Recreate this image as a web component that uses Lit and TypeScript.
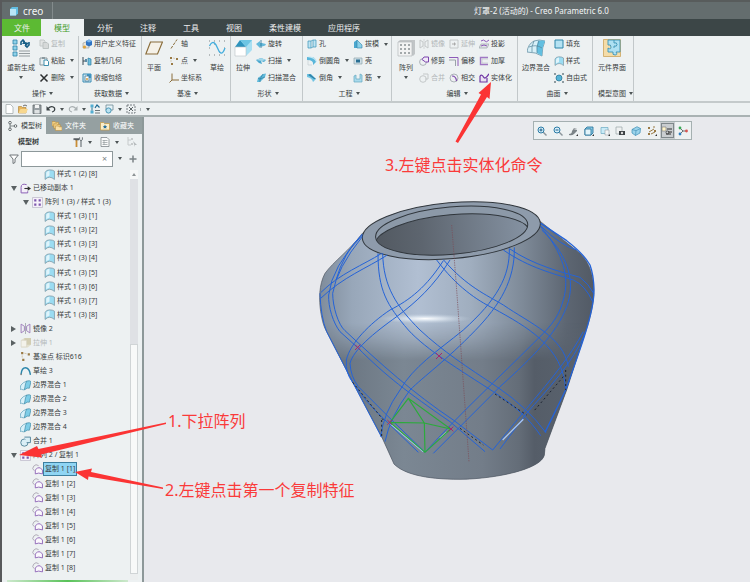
import { LitElement, html, svg, css, nothing, TemplateResult } from "lit";
import { customElement, state } from "lit/decorators.js";
import { classMap } from "lit/directives/class-map.js";

type Shape = ReturnType<typeof svg>;

/* Small glyphs are drawn on a 10 x 10 grid, large ones on 18 x 18. */
const small: Record<string, Shape> = {
  copy: svg`<path d="M1 1h4l1 1v5H1z" fill="#e3e5e5" stroke="#c3c8c8"/><path d="M4 3.5h4l1.500 1.500v4.500H4z" fill="#d6d9d9" stroke="#bcc2c2"/>`,
  paste: svg`<path d="M1 2h7v7H1z" fill="#e9eef0" stroke="#8b999f"/><path d="M3 1h3v2H3z" fill="#8b999f"/><path d="M5 4h3l1.500 1.500v4H5z" fill="#fff" stroke="#3f8fae"/>`,
  del: svg`<path d="M1.500 1.500L8.500 8.500M8.500 1.500L1.500 8.500" stroke="#2c2f30" stroke-width="1.500"/>`,
  udf: svg`<path d="M1 4l3-1 3 1v5H1z" fill="#e6e4dc" stroke="#9c9c95" stroke-width=".6"/><path d="M4 2l3-1.500 3 1.500v4l-3 1.500L4 6z" fill="#2f74c4"/><path d="M4 2l3-1.500 3 1.500-3 1.500z" fill="#79b4e8"/><circle cx="2.500" cy="8" r="1.600" fill="#e0a33c"/>`,
  copygeom: svg`<path d="M1 1v8M1 5h4" stroke="#3b4b55" fill="none"/><path d="M3 3h2v3H3z" fill="#5d8ba6"/><path d="M6 2l3 1v6H6z" fill="#6fc0df" stroke="#2b7ba0" stroke-width=".7"/>`,
  shrink: svg`<path d="M1 1h8v8H1z" fill="#cfe9f4" stroke="#3b8cb4"/><path d="M5 1h4v4H5z" fill="#3f95c4"/><path d="M3 3h4v5H3z" fill="#fff" stroke="#487a94" stroke-width=".8"/><circle cx="5" cy="6" r="1" fill="#d79a3a"/>`,
  axis: svg`<path d="M2 9.500L8 .5" stroke="#8a6d3b" stroke-dasharray="3 1.200"/>`,
  point: svg`<path d="M1 1h2v2H1zM7 2h2v2H7zM2 7h2v2H2z" fill="#9a7a44"/><path d="M4 2l2 .5M2 4v2" stroke="#c8b48e" stroke-width=".6"/>`,
  csys: svg`<path d="M3 .5V7H10M3 7L.5 9.500" fill="none" stroke="#8a6d3b"/>`,
  revolve: svg`<path d="M0 5l4-3v2c3 0 5 .5 6 1.500-1 1.500-3 2-6 2V9z" fill="#64b9da"/><path d="M5 1v8" stroke="#2a7598" stroke-width=".8"/>`,
  sweep: svg`<path d="M0 4l5-2 5 2-2 2-3-1 1 3-3-1z" fill="#4aa7ce"/><path d="M0 4l5-2 5 2-4 1z" fill="#a4d8ea"/>`,
  blend: svg`<path d="M1 9L2 5l5-4 3-.5L9 4 4 9z" fill="#5fb9da"/><path d="M2 5l2 1v3M7 1l-3 5 5-2" stroke="#2a7598" stroke-width=".6" fill="none"/>`,
  hole: svg`<path d="M1 2h3v7H1zM6 1h3v7H6z" fill="#bfe4f2" stroke="#3793b8" stroke-width=".7"/><path d="M4 2l2-1M4 9l2-1" stroke="#3793b8" stroke-width=".7"/>`,
  round: svg`<path d="M0 1h4q5 0 5 5l-3 3q1-5-6-5z" fill="#59b6da"/><path d="M0 1l3-.5Q9 1 10 6L9 6Q8 2 0 1z" fill="#c3e7f3"/><path d="M1 4v5h4" stroke="#c1c9cc" stroke-width=".6" fill="none"/>`,
  chamfer: svg`<path d="M0 1h4l5 5-3 3q-1-4-6-5z" fill="#6fc3e2"/><path d="M3 1l6 5H7L1 2z" fill="#2f83a9"/>`,
  draft: svg`<path d="M1 9V3l3-2v8z" fill="#4ba7ce"/><path d="M4 1l5 5v3H4z" fill="#8ad0e8" stroke="#2e82a7" stroke-width=".6"/>`,
  shell: svg`<path d="M1 2h8v6H1z" fill="#cfe0e7" stroke="#8fa4ad" stroke-width=".7"/><path d="M3 3.500h4v3H3z" fill="#2a6f93"/>`,
  rib: svg`<path d="M1 3v6h8V2L7 1v5H3V2z" fill="#a9daec" stroke="#63a7c0" stroke-width=".7"/>`,
  mirror: svg`<path d="M1 1l3 2v4L1 9zM9 1L6 3v4l3 2z" fill="none" stroke="#c4c8c9"/><path d="M5 0v10" stroke="#d3d6d7"/>`,
  mirrorP: svg`<path d="M1 1l3 2v4L1 9zM9 1L6 3v4l3 2z" fill="none" stroke="#9a78b8" stroke-width=".8"/><path d="M5 0v10" stroke="#8a8f94" stroke-width=".6"/>`,
  extend: svg`<path d="M1 1h8v8H1z" fill="none" stroke="#c4c8c9"/><path d="M3 5h3" stroke="#aaa"/><path d="M5 3l2 2-2 2z" fill="#aaa"/>`,
  trim: svg`<circle cx="4" cy="6" r="3.400" fill="none" stroke="#9aa3a8" stroke-width=".8"/><path d="M5 1h4.500v5H6.500L3 3.500z" fill="#f1e9f8" stroke="#7b45ad"/>`,
  offset: svg`<path d="M0 1.500h9V10" fill="none" stroke="#8d5ab8"/><path d="M0 4h6.500V10" fill="none" stroke="#9aa3a8"/>`,
  merge: svg`<circle cx="4" cy="6" r="3.300" fill="none" stroke="#c4c8c9"/><path d="M4 1h5v5H6" fill="none" stroke="#c4c8c9"/>`,
  mergeT: svg`<circle cx="4" cy="6" r="3.300" fill="#d9eef6" stroke="#5c8ba0" stroke-width=".9"/><path d="M4 1h5.500v5H6" fill="#d9eef6" stroke="#5c8ba0" stroke-width=".9"/>`,
  intersect: svg`<circle cx="5" cy="5" r="4" fill="#eef0f2" stroke="#9aa3a8" stroke-width=".8"/><path d="M3 3q4 0 4.500 5" fill="none" stroke="#7b45ad" stroke-width="1.200"/>`,
  project: svg`<path d="M0 9l2-4h8L8 9z" fill="#e1e4e7" stroke="#9aa3a8" stroke-width=".7"/><path d="M2 2q3-2 4 0t4-1M2 7q3-2 6 0" fill="none" stroke="#8d5ab8"/>`,
  thicken: svg`<path d="M9 1.500H1.500v7H9" fill="none" stroke="#a078c4" stroke-width="1.400"/><path d="M9 3H3v4h6" fill="none" stroke="#b9bfc4" stroke-width=".6"/>`,
  solidify: svg`<path d="M1 3v6h7V5" fill="#e9e2f1" stroke="#6f35a5" stroke-width="1.200"/><path d="M1 3q2-2 3.500 1T10 .8" fill="none" stroke="#6f35a5" stroke-width="1.300"/>`,
  fill: svg`<path d="M1 1h8v8H1z" fill="#b5e2f2" stroke="#2d84a8"/>`,
  style: svg`<path d="M1 9.500V3Q2 .8 5 .8T9.500 2v7.500Q5 5.500 1 9.500z" fill="#9bdcf2" stroke="#7c98a5" stroke-width=".7"/><path d="M2 3.500Q3 1.500 5 1.500V6L2 7.500z" fill="#dff4fb"/>`,
  freestyle: svg`<circle cx="5" cy="5" r="3" fill="#56b3d6" stroke="#23708f" stroke-width=".7"/><path d="M0 0h2v2H0zM8 0h2v2H8zM0 8h2v2H0zM8 8h2v2H8z" fill="#8e9ba0"/>`,
  new: svg`<path d="M2 .5h4.500L9 3v6.500H2z" fill="#fff" stroke="#9ba3a5" stroke-width=".7"/>`,
  open: svg`<path d="M.5 9V2.500h3l1 1H8V9z" fill="#e7b55c" stroke="#ab7d2b" stroke-width=".6"/><path d="M2.500 5H10L8 9H.5z" fill="#f7d78e"/><path d="M5 2q2-2 4 0" stroke="#333" fill="none" stroke-width=".7"/>`,
  save: svg`<path d="M1 1h8v8.500H1z" fill="#98a0a4" stroke="#62696d" stroke-width=".8"/><path d="M3 1h4v3H3z" fill="#f3f4f4"/><path d="M2.500 6h5v3.500h-5z" fill="#dfe2e3"/>`,
  undo: svg`<path d="M2 4.500Q6 1 8.500 4 9.500 7 6 8" fill="none" stroke="#3a4144" stroke-width="1.300"/><path d="M.5 2v4.500h4z" fill="#3a4144"/>`,
  redo: svg`<path d="M8 4.500Q4 1 1.500 4 .5 7 4 8" fill="none" stroke="#a9b0b2" stroke-width="1.100"/><path d="M9.500 2v4.500h-4z" fill="#a9b0b2"/>`,
  regen: svg`<path d="M.5.500h3v3h-3zM.5 6.500h3v3h-3z" fill="#53aed2"/><path d="M5 6.500h5M5 9h5" stroke="#6d777b"/><path d="M5 4l2-3 2.500 2.500" stroke="#1c6a92" fill="none" stroke-width="1.200"/><path d="M2 3.500v3" stroke="#2c6f8f"/>`,
  windows: svg`<path d="M2 1h7v5H2z" fill="#e5f2f7" stroke="#6f8a96" stroke-width=".8"/><circle cx="4.500" cy="6.500" r="2.600" fill="#b9e2f1" stroke="#2d84a8" stroke-width=".8"/>`,
  close: svg`<path d="M1 1h8v8H1z" fill="none" stroke="#5e6669" stroke-width=".8" stroke-dasharray="2 1"/><path d="M3 3l4 4M7 3L3 7" stroke="#5e6669"/>`,
  treeTab: svg`<path d="M2 2v6M2 5h5" stroke="#596164" stroke-width=".7" fill="none"/><circle cx="2" cy="1.700" r="1.300" fill="#fff" stroke="#444c4f" stroke-width=".8"/><circle cx="7.500" cy="5" r="1.300" fill="#fff" stroke="#444c4f" stroke-width=".8"/><circle cx="2" cy="8.300" r="1.300" fill="#fff" stroke="#444c4f" stroke-width=".8"/>`,
  folders: svg`<path d="M0 .5h3l.6.800h3V5H0z" fill="#f2cf85" stroke="#ae8234" stroke-width=".5"/><path d="M1.700 2.800h3l.6.800h3V7.300H1.700z" fill="#f2cf85" stroke="#ae8234" stroke-width=".5"/><path d="M3.400 5h3l.6.800h3v3.700H3.400z" fill="#f9e0a9" stroke="#ae8234" stroke-width=".5"/>`,
  fav: svg`<path d="M.5 1.500h3l1 1h5v6.500h-9z" fill="#fbeec8" stroke="#c49a42" stroke-width=".7"/><path d="M5 3.500l.7 1.400 1.500.2-1.100 1 .3 1.500L5 6.900l-1.400.7.3-1.500-1.100-1 1.500-.2z" fill="#26709b"/>`,
  tools: svg`<path d="M3.500 3v7" stroke="#c98d35" stroke-width="1.800"/><path d="M.5 1.200h5.500v2H2q-.5-1-1.500 0z" fill="#555c60"/><path d="M8 3v7" stroke="#6f777b" stroke-width="1.200"/><path d="M6.600.3v2.400L8 3.700l1.400-1V.3" fill="none" stroke="#6f777b"/>`,
  sheet: svg`<path d="M1 .5h6L9 2.500v7H1z" fill="#fafbfb" stroke="#70797c" stroke-width=".7"/><path d="M2.500 3.500h5M2.500 5.500h5M2.500 7.500h5M4 3v5" stroke="#90999c" stroke-width=".7"/>`,
  treeGray: svg`<path d="M1 0v8h3M1 3h3" fill="none" stroke="#c6cacb"/><path d="M4 1h2v2H4zM4 6h2v2H4z" fill="#c6cacb"/><path d="M6 4l4 4H8v2z" fill="#b4b9bb"/>`,
  funnel: svg`<path d="M.7 1h8.600L6 5v3.500L4 9.500V5z" fill="#fff" stroke="#60686b" stroke-width=".9"/>`,
  plus: svg`<path d="M5 1.500v7M1.500 5h7" stroke="#7b8386" stroke-width="1.500"/>`,
  moved: svg`<path d="M6 1.500Q1 0 1 4v5h6V7.500" fill="#f4eff9" stroke="#8a5fb4" stroke-width=".9"/><path d="M4 5h4" stroke="#333"/><path d="M7 3l3 2-3 2z" fill="#333"/>`,
  pattern: svg`<path d="M.5.500h9v9h-9z" fill="#f7f3fb" stroke="#a7a2b5" stroke-width=".5"/><path d="M2 2h2v2H2zM6 2h2v2H6zM2 6h2v2H2zM6 6h2v2H6z" fill="#7d57ad"/>`,
  extrudeGray: svg`<path d="M1 3l3-2h6v6l-3 2.500H1z" fill="#e2dfcd"/><path d="M4 1h6v6H4z" fill="#d2cdb2"/><path d="M1 3h5v6H1z" fill="#f3f2ea" stroke="#d3d0bf" stroke-width=".5"/>`,
  sketch: svg`<path d="M1 8.500Q1.500 2.500 5 2.500T9.500 9" fill="none" stroke="#2a86ab" stroke-width="1.300"/><circle cx="1" cy="8.500" r=".8" fill="#888"/>`,
  boundary: svg`<path d="M0 8.500Q0 4 3 2.500L6 1v6L3 9q-2-1-3-.5z" fill="#d9f1f9" stroke="#4f97b3" stroke-width=".6"/><path d="M6 1q3-1 4 .5L8.500 7.500Q7 6.500 4 9L5 3.500z" fill="#7ecde7" stroke="#3c86a4" stroke-width=".6"/>`,
  copyFeat: svg`<path d="M2 6Q-.5 4.500 1.500 2T6 1.500" fill="none" stroke="#a8a3b0" stroke-width=".8"/><path d="M3 9V5.500L5 3.500h2.500L9.500 5.500V9Q6 7.500 3 9z" fill="#fbf8fd" stroke="#8a5fb4" stroke-width=".8"/>`,
  zoomIn: svg`<path d="M6 6l3.500 3.500" stroke="#8b969b" stroke-width="1.400"/><circle cx="4" cy="4" r="3" fill="#d9f0fa" stroke="#2a7ba6"/><path d="M4 2.500v3M2.500 4h3" stroke="#1c5f88"/>`,
  zoomOut: svg`<path d="M6 6l3.500 3.500" stroke="#8b969b" stroke-width="1.400"/><circle cx="4" cy="4" r="3" fill="#d9f0fa" stroke="#2a7ba6"/><path d="M2.500 4h3" stroke="#1c5f88"/>`,
  repaint: svg`<path d="M1 8Q4 8 4 5l2-3h3v3L6 8q-2 2-5 1z" fill="#7b8387"/><path d="M5 3l4-1v2z" fill="#e4e7e8"/><path d="M8 10h2V8z" fill="#333"/>`,
  viewBox: svg`<path d="M1 3l2-2h6v6L7 9H1z" fill="#8ccbe4" stroke="#1f6f98" stroke-width=".8"/><path d="M1 3h6v6H1z" fill="#e3f4fa" stroke="#1f6f98" stroke-width=".8"/><path d="M8 10h2V8z" fill="#333"/>`,
  saved: svg`<path d="M1 1.500h7v6H1z" fill="#c9ebf7" stroke="#6aa9c2" stroke-width=".7"/><path d="M5 4h4v5H5z" fill="#f4f5f5" stroke="#9aa3a8" stroke-width=".6"/><path d="M8 10h2V8z" fill="#333"/>`,
  camera: svg`<path d="M1 1h6v7H1z" fill="#eff1f1" stroke="#9aa3a8" stroke-width=".7"/><path d="M4 5h6v4H4z" fill="#3b4144"/><circle cx="7" cy="7" r="1.200" fill="#ddd"/>`,
  cube: svg`<path d="M1 3.500L6 .7 9.500 2.500 9 7 4.500 9.500 1 7z" fill="#9bd3ea" stroke="#3b8cb4" stroke-width=".7"/><path d="M1 3.500l4 1.200 4.500-2.200M5 4.700L4.500 9.500" fill="none" stroke="#3b8cb4" stroke-width=".6"/>`,
  datum: svg`<path d="M1 1l2 2M3 1L1 3M6 1h2M2 6l5-3M4 8l4-2" stroke="#9a7a44" fill="none"/><path d="M1 7h2v2H1zM7 4h2v2H7z" fill="#9a7a44"/><path d="M8 10h2V8z" fill="#333"/>`,
  annot: svg`<path d="M0 1h4v4H0z" fill="#fff4c9" stroke="#777" stroke-width=".6"/><path d="M5 3h5M6 6h4M4 8h5" stroke="#333"/><circle cx="5.500" cy="6.500" r="1.500" fill="none" stroke="#333" stroke-width=".7"/>`,
  spin: svg`<path d="M2 2l3 3h4M5 5L2 8" fill="none" stroke="#5b6265" stroke-width=".9"/><circle cx="2" cy="2" r="1.400" fill="#3aa655"/><circle cx="8.500" cy="5" r="1.400" fill="#d9534f"/><circle cx="2" cy="8" r="1.400" fill="#2f7fc0"/>`,
};

const large: Record<string, Shape> = {
  regen: svg`<path d="M1 1h4v4H1zM1 7h4v4H1zM1 13h4v4H1z" fill="#8fd2ea" stroke="#2d84a8" stroke-width=".8"/><path d="M7 12h11M7 14.500h11M7 17h11" stroke="#949c9f"/><path d="M9 6V3l2-2 1 2h1M17 3v3l-2 2-2-2" fill="none" stroke="#185f87" stroke-width="1.600"/><path d="M10 5l3-4v4zM13 3v5l4-4z" fill="#185f87"/>`,
  plane: svg`<path d="M5.500 3H17.500L12.500 15H.8z" fill="#f5f1e8" stroke="#8a6d3b" stroke-width="1.200"/>`,
  sketch: svg`<path d="M1 2h1M6 2h1M11 2h1M16 2h1M1 9h1M16 9h1M1 16h1M6 16h1M11 16h1M16 16h1M6 5h1M11 13h1" stroke="#7e8587"/><path d="M1.500 7C5 0 8 5 9.500 9S14 18 17 9" fill="none" stroke="#45aede" stroke-width="1.300"/>`,
  extrude: svg`<path d="M1 8L6 1h12L12 8z" fill="#2d93bd"/><path d="M6 1h12v10l-6 6V8z" fill="#a7dff2"/><path d="M6 1l6 7 6-7z" fill="#6dc5e3"/><path d="M1 8h11v9H1z" fill="#fff" stroke="#b8c0c3" stroke-width=".6"/>`,
  pattern: svg`<path d="M1 3l2-2h15v14l-2 2z" fill="#c1c5c7"/><path d="M1 3h14v14H1z" fill="#f2f3f3" stroke="#b4b9bb" stroke-width=".7"/><path d="M3 5h2v2H3zM7 5h2v2H7zM11 5h2v2h-2zM3 9h2v2H3zM7 9h2v2H7zM11 9h2v2h-2zM3 13h2v2H3zM7 13h2v2H7zM11 13h2v2h-2z" fill="#a3a9ab"/>`,
  boundary: svg`<path d="M0 13Q1 5 7 2q5-2 11 0-3 6-3 15-6-4-15-4z" fill="#d8f0f8" stroke="#54849a" stroke-width=".7"/><path d="M11 2q5-1 7 0-3 6-3 15l-5-3q-1-6 1-12z" fill="#62bfe0"/><path d="M7 2Q4 8 5 13M12 1.500Q9 8 10 14M2 8q7-3 13 1" fill="none" stroke="#54849a" stroke-width=".7"/>`,
  puzzle: svg`<path d="M.5.500h17v17H.5z" fill="#f4dca8" stroke="#c59b4e" stroke-width=".7"/><path d="M5 1h12v12h-4q2 3-1 3t-2-3H5V9q3 2 3-1T5 6z" fill="#aee0f2" stroke="#3b93b5" stroke-width=".9"/><path d="M11 1v3q3-1 3 1.500T11 7v2" fill="none" stroke="#3b93b5" stroke-width=".9"/>`,
};

const ico = (name: string, cls = "i"): TemplateResult =>
  html`<svg class=${cls} viewBox="0 0 10 10" aria-hidden="true">${small[name]}</svg>`;

const tri = html`<span class="tri"></span>`;

const cmd = (icon: string, label: string, drop = false, off = false) => html`
  <button class="cmd" ?disabled=${off}>${ico(icon)}<span>${label}</span>${drop ? tri : nothing}</button>`;

const big = (icon: string, label: string, drop = false) => html`
  <button class="big">
    <svg class="bi" viewBox="0 0 18 18" aria-hidden="true">${large[icon]}</svg>
    <span>${label}</span>${drop ? tri : nothing}
  </button>`;

const group = (label: string, body: unknown, cls = "") => html`
  <section class="group ${cls}">
    <div class="tools">${body}</div>
    <button class="gl">${label}${tri}</button>
  </section>`;

const col = (body: unknown) => html`<div class="col">${body}</div>`;

interface Node { label: string; icon: string; depth: number; open?: boolean; off?: boolean }

const nums = (n: number) => Array.from({ length: n }, (_, i) => i + 1);

const nodes: Node[] = [
  { label: "样式 1 (2) [8]", icon: "style", depth: 2 },
  { label: "已移动副本 1", icon: "moved", depth: 0, open: true },
  { label: "阵列 1 (3) / 样式 1 (3)", icon: "pattern", depth: 1, open: true },
  ...nums(8).map((n) => ({ label: `样式 1 (3) [${n}]`, icon: "style", depth: 2 })),
  { label: "镜像 2", icon: "mirrorP", depth: 0, open: false },
  { label: "拉伸 1", icon: "extrudeGray", depth: 0, open: false, off: true },
  { label: "基准点 标识616", icon: "point", depth: 0 },
  { label: "草绘 3", icon: "sketch", depth: 0 },
  ...nums(4).map((n) => ({ label: `边界混合 ${n}`, icon: "boundary", depth: 0 })),
  { label: "合并 1", icon: "mergeT", depth: 0 },
  { label: "阵列 2 / 复制 1", icon: "pattern", depth: 0, open: true },
  ...nums(8).map((n) => ({ label: `复制 1 [${n}]`, icon: "copyFeat", depth: 1 })),
];

const font = css`"Noto Sans", "Noto Sans CJK SC", sans-serif`;

@customElement("model-tree")
export class ModelTree extends LitElement {
  @state() private selected = "复制 1 [1]";

  static styles = css`
    :host { display: flex; flex: 1; min-height: 0; }
    ul { flex: 1; margin: 0; padding: 0; list-style: none; display: grid; grid-auto-rows: 1fr; margin-bottom: 5px; }
    li { display: flex; align-items: center; padding-left: 9px; white-space: nowrap; }
    li.d1 { padding-left: 21px; }
    li.d2 { padding-left: 33px; }
    .tog { width: 9px; display: flex; }
    .tog i { border: 3px solid transparent; border-top: 5px solid #5a6163; border-bottom: 0; }
    .tog i.shut { border: 3px solid transparent; border-left: 5px solid #5a6163; border-right: 0; }
    .i { width: 11px; height: 11px; margin-right: 1px; flex: none; }
    button { all: unset; padding: 0 1px; line-height: 12px; color: #383d40; }
    li.off button { color: #b4b9bb; }
    li.sel button { background: #8fd5f4; outline: 1px solid #3d7f9f; }
    .bar { width: 8px; margin: 3px 4px 0 0; background: #dfe1e5; display: flex; flex-direction: column; }
    .bar b { height: 9px; background: #f6f7f7; display: grid; place-items: center; }
    .bar b::after { content: ""; border: 2px solid transparent; border-bottom: 3px solid #8d9395; border-top: 0; }
    .bar .gap { flex: 167; }
    .bar .thumb { flex: 230; background: #f8f9f9; border: 1px solid #d0d4d6; }
    .bar .end { flex: 6; background: #eceeef; }
  `;

  render() {
    return html`
      <ul role="tree">
        ${nodes.map((n) => html`
          <li role="treeitem" class=${classMap({ ["d" + n.depth]: true, off: !!n.off, sel: n.label === this.selected })}>
            <span class="tog">${n.open === undefined ? nothing : html`<i class=${n.open ? "" : "shut"}></i>`}</span>
            ${ico(n.icon)}
            <button @click=${() => (this.selected = n.label)}>${n.label}</button>
          </li>`)}
      </ul>
      <div class="bar"><b></b><span class="gap"></span><span class="thumb"></span><span class="end"></span></div>`;
  }
}

@customElement("vase-view")
export class VaseView extends LitElement {
  static styles = css`
    :host { display: block; }
    svg { display: block; width: 100%; }
  `;

  render() {
    const body =
      "M187 130C150 180 100 215 75 250C56 285 57 330 62 365C68 400 72 410 80 425L155 570L245 740L282 822C310 850 370 868 480 868C600 866 725 835 733 795L735 775L800 600L855 430C870 390 882 340 882 300C880 250 866 215 840 190L722 95Z";
    return html`
      <svg viewBox="0 0 930 900" role="img" aria-label="灯罩-2">
        <defs>
          <linearGradient id="side" x1="58" x2="882" y1="0" y2="0" gradientUnits="userSpaceOnUse">
            <stop offset="0" stop-color="#7f8c9b"/><stop offset=".12" stop-color="#98a7b9"/>
            <stop offset=".36" stop-color="#b1bfd2"/><stop offset=".55" stop-color="#a0aebf"/>
            <stop offset=".74" stop-color="#7e8a98"/><stop offset=".9" stop-color="#5d6672"/><stop offset="1" stop-color="#525a65"/>
          </linearGradient>
          <linearGradient id="low" x1="77" x2="860" y1="0" y2="0" gradientUnits="userSpaceOnUse">
            <stop offset="0" stop-color="#66717d"/><stop offset=".3" stop-color="#7b8793"/>
            <stop offset=".6" stop-color="#737d89"/><stop offset=".74" stop-color="#646d78"/>
            <stop offset=".8" stop-color="#555d68"/><stop offset="1" stop-color="#5a636e"/>
          </linearGradient>
          <linearGradient id="fade" x1="0" x2="0" y1="400" y2="510" gradientUnits="userSpaceOnUse">
            <stop offset="0" stop-color="#000"/><stop offset=".4" stop-color="#555"/><stop offset="1" stop-color="#fff"/>
          </linearGradient>
          <linearGradient id="hole" x1="228" x2="683" y1="0" y2="0" gradientUnits="userSpaceOnUse">
            <stop offset="0" stop-color="#525961"/><stop offset=".3" stop-color="#5d656f"/><stop offset="1" stop-color="#8592a2"/>
          </linearGradient>
          <radialGradient id="shine"><stop offset="0" stop-color="#fff"/><stop offset=".4" stop-color="#e6eef6" stop-opacity=".7"/><stop offset="1" stop-color="#c5d2e0" stop-opacity="0"/></radialGradient>
          <mask id="lower"><rect width="930" height="900" fill="url(#fade)"/></mask>
          <clipPath id="mouth"><ellipse cx="455" cy="122" rx="229" ry="71" transform="rotate(-5 455 122)"/></clipPath>
        </defs>
        <path d=${body} fill="url(#side)"/>
        <path d=${body} fill="url(#low)" mask="url(#lower)"/>
        <path d=${body} fill="none" stroke="#4e5660" stroke-width="2"/>
        <ellipse cx="375" cy="386" rx="140" ry="15" fill="url(#shine)"/>
        <ellipse cx="454" cy="122" rx="268" ry="84" transform="rotate(-5 454 122)" fill="#8e9bab" stroke="#30363c" stroke-width="3"/>
        <ellipse cx="455" cy="122" rx="229" ry="71" transform="rotate(-5 455 122)" fill="#8c99a8"/>
        <g clip-path="url(#mouth)">
          <ellipse cx="457" cy="146" rx="233" ry="72" transform="rotate(-5 457 146)" fill="url(#hole)" stroke="#30363c" stroke-width="3"/>
        </g>
        <ellipse cx="455" cy="122" rx="229" ry="71" transform="rotate(-5 455 122)" fill="none" stroke="#30363c" stroke-width="3"/>
        <g fill="none" stroke="#2463d8" stroke-width="3">
          <path d="M187 135Q95 230 86 315C84 350 100 400 120 425L172 472C260 560 320 605 450 695L555 785"/>
          <path d="M187 140Q110 235 98 310C98 350 115 405 135 422C240 520 340 610 460 690L578 780"/>
          <path d="M187 132Q130 190 108 270"/>
          <path d="M430 212C380 290 330 330 270 360C210 400 150 460 139 510Q136 550 158 577Q200 640 255 690L355 787"/>
          <path d="M450 210C400 290 350 335 290 380C220 430 160 480 150 520Q152 560 175 590L260 675L375 787"/>
          <path d="M234 190C234 300 260 345 325 420C380 480 480 540 580 605C650 650 690 690 722 737"/>
          <path d="M248 190C250 290 290 350 360 420C430 485 500 530 590 590Q680 650 738 728"/>
          <path d="M410 210C470 290 530 330 580 355C680 410 790 470 797 600"/>
          <path d="M430 209C500 290 560 315 610 345C690 400 790 440 805 530"/>
          <path d="M628 175C630 260 590 330 490 420C410 485 340 530 300 600Q250 670 242 740"/>
          <path d="M643 172C645 270 600 345 525 422C440 510 370 560 330 600Q270 680 255 755"/>
          <path d="M722 110C790 190 810 260 790 330C775 390 740 420 700 460C600 560 480 670 375 787"/>
          <path d="M725 120C800 190 830 270 800 350C770 430 700 500 600 590L400 790"/>
          <path d="M610 180C690 235 760 250 820 270Q855 285 878 335"/>
          <path d="M630 177C700 225 780 245 840 262Q865 280 881 310"/>
          <path d="M262 195C200 235 130 260 62 325M245 190C190 225 120 250 62 308"/>
          <path d="M857 425C820 520 740 600 680 670L600 777M850 425C810 500 760 560 680 655L578 780"/>
          <path d="M722 100L800 152Q850 190 870 225Q886 270 880 330C870 400 840 480 797 600L735 727" stroke-width="4"/>
          <path d="M722 108Q780 165 830 180"/>
          <path d="M60 310Q62 380 80 425L158 577L245 742"/>
        </g>
        <g fill="none" stroke="#1c2431" stroke-width="3" stroke-dasharray="6 8">
          <path d="M158 577L250 690M585 612L680 675M790 560L700 665M480 715L550 765M245 690V740M797 540V600"/>
        </g>
        <path d="M272 702L370 785M420 745L440 727M670 688L608 750" stroke="#a9c6f2" stroke-width="4"/>
        <g fill="none" stroke="#2bab3b" stroke-width="3.500">
          <path d="M325 625L270 697L375 787L452 717ZM325 625L373 699L452 717M270 697L373 699L375 787"/>
        </g>
        <path d="M455 105L470 300L507 815" fill="none" stroke="#7c4a55" stroke-width="2" stroke-dasharray="4 3"/>
        <path d="M165 464l16 16M181 464l-16 16M408 489l18 18M426 489l-18 18M262 690l14 14M276 690l-14 14M446 710l14 14M460 710l-14 14" stroke="#a6276f" stroke-width="3"/>
      </svg>`;
  }
}

@customElement("app-root")
export class AppRoot extends LitElement {
  @state() private tab = "模型";

  static styles = css`
    :host { display: flex; flex-direction: column; box-sizing: border-box; position: relative; min-height: 100vh;
      overflow: hidden; border-left: 2px solid #58595b; background: #edf1f2; color: #383d40;
      font: 7px/12px ${font}; }
    button { all: unset; box-sizing: border-box; white-space: nowrap; }
    .i { width: 10px; height: 10px; flex: none; }
    .tri { display: inline-block; flex: none; border: 2px solid transparent; border-top: 3px solid #4d5456; border-bottom: 0; margin-left: 3px; }
    header { display: flex; align-items: center; height: 19px; box-sizing: border-box; background: #646d6e; color: #f4f6f6; border-top: 2px solid #585c5c; }
    .brand { display: flex; align-items: center; gap: 4px; width: 51px; box-sizing: border-box; height: 17px; padding-left: 7px; border-right: 1px solid #838b8c; font-size: 10px; }
    .title { flex: 1; margin: 0; padding-left: 280px; text-align: center; font-size: 8px; font-weight: 400; }
    nav { display: flex; height: 17px; background: #3c4647; color: #eceeee; font-size: 8px; }
    nav button { padding: 0 14px 0 13px; line-height: 17px; }
    nav .file { width: 39px; padding: 0 0 0 12px; background: #5cba33; }
    nav .on { background: #edf1f2; color: #3f9a28; }
    .ribbon { display: grid; grid-template-columns: 77px 63px 89px 72px 89px 126px 75px 41px; height: 65px; border-bottom: 2px solid #c4cacb; }
    .group { display: flex; flex-direction: column; border-right: 1px solid #c2c8ca; padding-left: 3px; min-width: 0; }
    .group.p4 { padding-left: 4px; }
    .group.p5 { padding-left: 5px; }
    .tools { display: flex; height: 50px; gap: 4px; }
    .wide .tools { gap: 6px; }
    .col { display: grid; grid-template-rows: repeat(3, 1fr); }
    .cmd { display: flex; align-items: center; gap: 2px; }
    .cmd:disabled { color: #b2b7b9; }
    .big { display: flex; flex-direction: column; align-items: center; padding-top: 3px; }
    .big span:not(.tri) { margin-top: 5px; }
    .big .tri { margin: 2px 0 0; }
    .bi { width: 18px; height: 18px; }
    .gl { flex: 1; text-align: center; display: flex; align-items: center; justify-content: center; }
    .quick { display: flex; align-items: center; height: 14px; box-sizing: border-box; padding-left: 2px; gap: 4px; border-bottom: 2px solid #a9b2b3; }
    .quick button { display: flex; align-items: center; }
    .quick .drop { gap: 1px; }
    .quick .last { border-left: 1px solid #aeb5b7; padding-left: 2px; }
    main { flex: 1; display: flex; min-height: 0; }
    aside { width: 142px; box-sizing: border-box; display: flex; flex-direction: column; border-right: 2px solid #8d9899; }
    .side { display: flex; height: 17px; background: #95a0a1; color: #fff; }
    .side button { display: flex; align-items: center; gap: 3px; padding: 0 6px; width: 49px; }
    .side .on { background: #edf1f2; color: #383d40; width: 44px; }
    .head { display: flex; align-items: center; height: 16px; padding: 0 5px 0 16px; font-weight: 700; }
    .head h2 { flex: 1; margin: 0; font-size: 7px; }
    .head button { display: flex; align-items: center; gap: 2px; margin-left: 8px; }
    .find { display: flex; align-items: center; height: 17px; padding: 0 5px 0 7px; gap: 2px; }
    .box { display: flex; align-items: center; width: 92px; height: 16px; box-sizing: border-box; border: 1px solid #8d989a; background: #fff; }
    .box input { all: unset; flex: 1; min-width: 0; padding-left: 3px; height: 14px; }
    .box button { width: 10px; font-size: 9px; color: #7c8486; }
    .find .tri { margin: 0 4px 0 3px; }
    .foot { height: 2px; margin: 0 14px 0 5px; background: linear-gradient(90deg, #cde8cd, #59c259, #cde8cd); }
    .canvas { flex: 1; position: relative; background: #e8e9ed; min-width: 0; }
    .floatbar { position: absolute; left: 389px; top: 4px; width: 159px; height: 19px; box-sizing: border-box; display: flex; border: 1px solid #a5b0b1; background: #edf1f2; }
    .floatbar button { flex: 1; display: grid; place-items: center; }
    .floatbar .on { background: #c9cdd0; outline: 1px solid #7f888b; outline-offset: -2px; }
    .model { position: absolute; left: 156px; top: 73px; width: 310px; }
    .note { position: absolute; margin: 0; font-size: 16px; line-height: 20px; color: #fa3a3a; white-space: nowrap; }
    .n1 { left: 24px; top: 294px; }
    .n2 { left: 21px; top: 363px; }
    .n3 { left: 241px; top: 38px; }
    .arrows { position: absolute; left: -2px; top: 0; width: 750px; height: 582px; pointer-events: none; }
  `;

  render() {
    const tabs = ["模型", "分析", "注释", "工具", "视图", "柔性建模", "应用程序"];
    const view = ["zoomIn", "zoomOut", "repaint", "viewBox", "saved", "camera", "cube", "datum", "annot", "spin"];
    return html`
      <header>
        <div class="brand">
          <svg class="i" viewBox="0 0 10 10" aria-hidden="true"><path d="M1 3l2-2h6v6.500L7 9.500H1z" fill="#62bde2"/><path d="M1 3h6v6.500H1z" fill="#b9e5f6"/></svg>
          <span>creo</span>
        </div>
        <h1 class="title">灯罩-2 (活动的) - Creo Parametric 6.0</h1>
      </header>
      <nav>
        <button class="file">文件</button>
        ${tabs.map((t) => html`<button class=${classMap({ on: t === this.tab })} @click=${() => (this.tab = t)}>${t}</button>`)}
      </nav>
      <div class="ribbon">
        ${group("操作", html`${big("regen", "重新生成", true)}
          ${col([cmd("copy", "复制", false, true), cmd("paste", "粘贴", true), cmd("del", "删除", true)])}`, "p5")}
        ${group("获取数据", col([cmd("udf", "用户定义特征"), cmd("copygeom", "复制几何"), cmd("shrink", "收缩包络")]))}
        ${group("基准", html`${big("plane", "平面")}
          ${col([cmd("axis", "轴"), cmd("point", "点", true), cmd("csys", "坐标系")])}
          ${big("sketch", "草绘")}`, "wide")}
        ${group("形状", html`${big("extrude", "拉伸")}
          ${col([cmd("revolve", "旋转"), cmd("sweep", "扫描", true), cmd("blend", "扫描混合")])}`)}
        ${group("工程", html`
          ${col([cmd("hole", "孔"), cmd("round", "倒圆角", true), cmd("chamfer", "倒角", true)])}
          ${col([cmd("draft", "拔模", true), cmd("shell", "壳"), cmd("rib", "筋", true)])}`, "p4")}
        ${group("编辑", html`${big("pattern", "阵列", true)}
          ${col([cmd("mirror", "镜像", false, true), cmd("trim", "修剪"), cmd("merge", "合并", false, true)])}
          ${col([cmd("extend", "延伸", false, true), cmd("offset", "偏移"), cmd("intersect", "相交")])}
          ${col([cmd("project", "投影"), cmd("thicken", "加厚"), cmd("solidify", "实体化")])}`, "p5")}
        ${group("曲面", html`${big("boundary", "边界混合")}
          ${col([cmd("fill", "填充"), cmd("style", "样式"), cmd("freestyle", "自由式")])}`, "p4")}
        ${group("模型意图", big("puzzle", "元件界面"), "p5")}
      </div>
      <div class="quick">
        <button aria-label="新建">${ico("new")}</button>
        <button aria-label="打开">${ico("open")}</button>
        <button aria-label="保存">${ico("save")}</button>
        <button class="drop" aria-label="撤消">${ico("undo")}${tri}</button>
        <button class="drop" aria-label="重做">${ico("redo")}${tri}</button>
        <button aria-label="重新生成">${ico("regen")}</button>
        <button class="drop" aria-label="窗口">${ico("windows")}${tri}</button>
        <button aria-label="关闭">${ico("close")}</button>
        <button class="last" aria-label="自定义">${tri}</button>
      </div>
      <main>
        <aside>
          <div class="side">
            <button class="on">${ico("treeTab")}模型树</button>
            <button>${ico("folders")}文件夹</button>
            <button>${ico("fav")}收藏夹</button>
          </div>
          <div class="head">
            <h2>模型树</h2>
            <button aria-label="设置">${ico("tools")}${tri}</button>
            <button aria-label="显示">${ico("sheet")}${tri}</button>
            <button aria-label="列">${ico("treeGray")}</button>
          </div>
          <div class="find">
            ${ico("funnel")}
            <div class="box"><input type="text" aria-label="搜索"><button aria-label="清除">×</button></div>
            ${tri}
            ${ico("plus")}
          </div>
          <model-tree></model-tree>
          <div class="foot"></div>
        </aside>
        <div class="canvas">
          <vase-view class="model"></vase-view>
          <div class="floatbar">
            ${view.map((v) => html`<button class=${v === "annot" ? "on" : ""} aria-label=${v}>${ico(v)}</button>`)}
          </div>
          <p class="note n1">1.下拉阵列</p>
          <p class="note n2">2.左键点击第一个复制特征</p>
          <p class="note n3">3.左键点击实体化命令</p>
        </div>
      </main>
      <svg class="arrows" viewBox="0 0 750 582" aria-hidden="true">
        <g fill="#fb3434">
          <path d="M19 455L37 446L38.500 449L166 422.500V424L41 454.500L42 457.500Z"/>
          <path d="M75 472L92 468.500L91 472L163 487.500V489L88.500 476.500L88 480Z"/>
          <path d="M491 82L489.500 99L487 97L458 143L455.500 141.500L481 94.500L478.500 93Z"/>
        </g>
      </svg>`;
  }
}
